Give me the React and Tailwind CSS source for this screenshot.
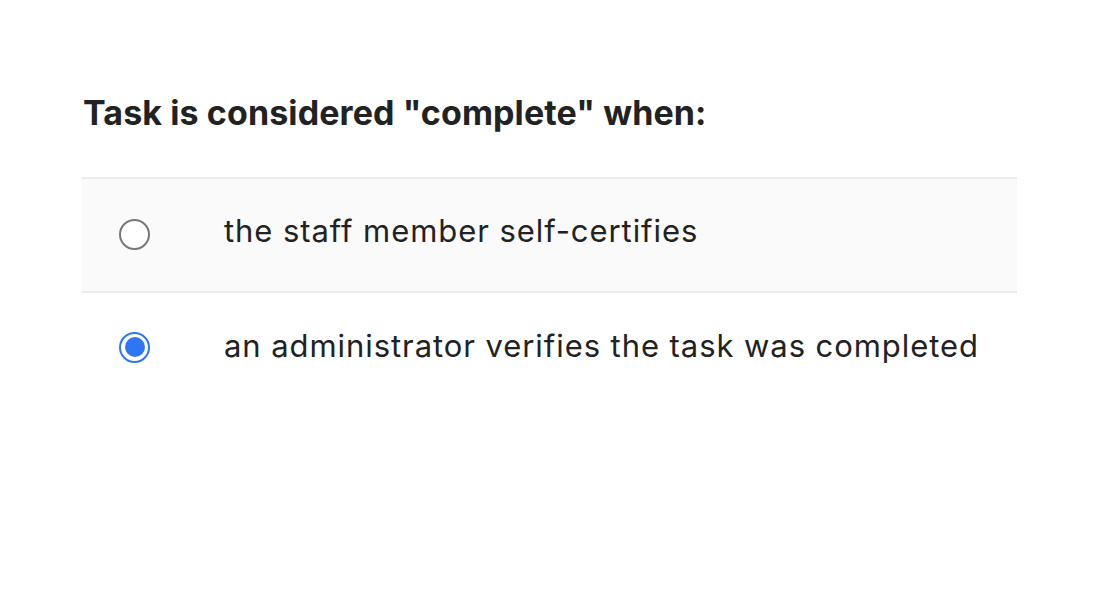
export default function App() {
  const options = [
    { label: "the staff member self-certifies", checked: false },
    { label: "an administrator verifies the task was completed", checked: true },
  ];
  return (
    <div className="min-h-screen bg-white pt-[93px] pl-[82px] pr-[103px]" style={{ fontFamily: "Inter, 'Noto Sans', sans-serif" }}>
      <h2 className="text-[34px] leading-[40px] font-bold text-[#222] pl-px tracking-[0.1px]">Task is considered "complete" when:</h2>
      <div className="mt-[44px] border-t-2 border-[#ececec]">
        {options.map((o, i) => (
          <div
            key={i}
            className={`flex items-center h-[114px] ${i === 0 ? "bg-[#fafafa] border-b-2 border-[#ececec]" : ""}`}
          >
            <div className={`w-[142px] pl-[37px] ${i === 0 ? "mb-[2px]" : "mb-[6px]"}`}>
              {o.checked ? (
                <span className="w-[31px] h-[31px] rounded-full border-[2.5px] border-[#2f76f5] bg-white flex items-center justify-center">
                  <span className="w-[20px] h-[20px] rounded-full bg-[#2f76f5]" />
                </span>
              ) : (
                <span className="block w-[31px] h-[31px] rounded-full border-2 border-[#777] bg-white" />
              )}
            </div>
            <span className="text-[31px] leading-[45px] tracking-[0.93px] text-[#222] mb-[9px]">{o.label}</span>
          </div>
        ))}
      </div>
    </div>
  );
}
